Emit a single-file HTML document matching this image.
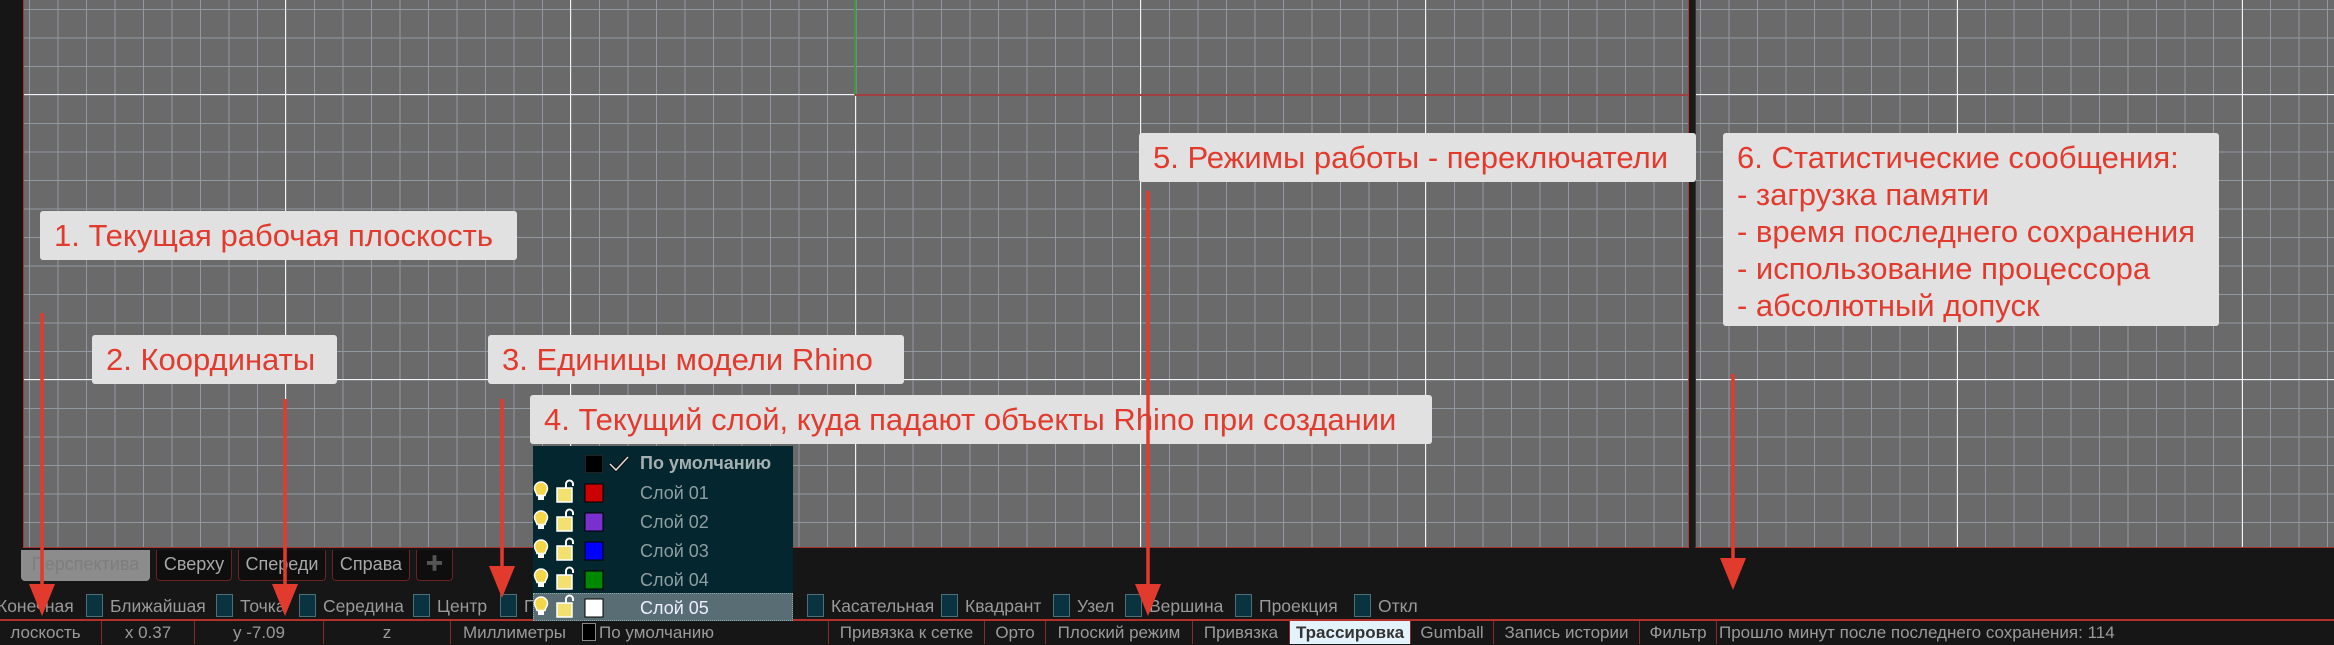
<!DOCTYPE html>
<html><head><meta charset="utf-8"><style>
*{margin:0;padding:0;box-sizing:border-box}
body{width:2334px;height:644px;background:#161616;position:relative;overflow:hidden;font-family:"Liberation Sans","Noto Sans CJK SC",sans-serif}
.vp{position:absolute;top:0;height:548px;background-color:#6a6a6a}
#v1{left:23px;width:1665px;border-left:1px solid #a33;border-bottom:1px solid #a33;
background-image:linear-gradient(to right,#f2f2f2 1px,transparent 1px),linear-gradient(to bottom,#f2f2f2 1px,transparent 1px),linear-gradient(to right,#9198a2 1px,transparent 1px),linear-gradient(to bottom,#9198a2 1px,transparent 1px);
background-size:285px 285px,285px 285px,28.5px 28.5px,28.5px 28.5px;background-position:261px 0,0 94px,5px 0,0 9px}
#v2{left:1695px;width:639px;border-left:1px solid #333;border-bottom:1px solid #a33;
background-image:linear-gradient(to right,#f2f2f2 1px,transparent 1px),linear-gradient(to bottom,#f2f2f2 1px,transparent 1px),linear-gradient(to right,#9198a2 1px,transparent 1px),linear-gradient(to bottom,#9198a2 1px,transparent 1px);
background-size:285px 285px,285px 285px,28.5px 28.5px,28.5px 28.5px;background-position:261px 0,0 94px,4px 0,0 9px}
.lbl{position:absolute;background:#e1e1e1;color:#e33a2e;font-size:31px;padding:0 14px;border-radius:3px;line-height:49px;white-space:nowrap}
.tab{position:absolute;top:550px;height:31px;background:#0e0e0e;border:1px solid #6a2222;border-top:none;color:#a8a8a8;font-size:18px;line-height:28px;text-align:center;border-radius:0 0 4px 4px}
.snap{position:absolute;top:594px;height:24px;font-size:17.5px;color:#9a9a9a;line-height:24px;white-space:nowrap}
.cb{display:inline-block;width:17px;height:23px;background:#0a3340;border:1px solid #4f6f76;vertical-align:top;margin-right:7px}
#sb{position:absolute;left:0;top:619px;width:2334px;height:25px;border-top:2px solid #b3302b}
.s{position:absolute;top:0;height:23px;font-size:17px;color:#9a9a9a;line-height:24px;text-align:center;border-left:1px solid #8a2a2a;white-space:nowrap}
#lay{position:absolute;left:533px;top:446px;width:260px;height:174px;background:#03262f}
.row{position:absolute;left:0;width:260px;height:29px;font-size:18px;color:#8f9ea2;line-height:29px}
.row span.t{position:absolute;left:107px}
.sw{position:absolute;left:52px;top:6px;width:18px;height:18px;border:1px solid #000}
</style></head><body>
<div class="vp" id="v1"></div>
<div class="vp" id="v2"></div>
<div style="position:absolute;left:1688px;top:0;width:7px;height:548px;background:#1a1a1a;border-left:1px solid #b33"></div>
<div style="position:absolute;left:854px;top:0;width:2px;height:95px;background:#3e9a3e"></div>
<div style="position:absolute;left:855px;top:94px;width:833px;height:2px;background:#a04040"></div>

<div class="tab" style="left:21px;width:129px;background:#8c8c8c;color:#7e7e7e;border-color:#8c8c8c">Перспектива</div>
<div class="tab" style="left:156px;width:76px">Сверху</div>
<div class="tab" style="left:238px;width:88px">Спереди</div>
<div class="tab" style="left:332px;width:78px">Справа</div>
<div class="tab" style="left:416px;width:37px;color:#555">✚</div>

<div class="snap" style="left:-3px">Конечная</div>
<div class="snap" style="left:86px"><span class="cb"></span>Ближайшая</div>
<div class="snap" style="left:216px"><span class="cb"></span>Точка</div>
<div class="snap" style="left:299px"><span class="cb"></span>Середина</div>
<div class="snap" style="left:413px"><span class="cb"></span>Центр</div>
<div class="snap" style="left:500px"><span class="cb"></span>П</div>
<div class="snap" style="left:807px"><span class="cb"></span>Касательная</div>
<div class="snap" style="left:941px"><span class="cb"></span>Квадрант</div>
<div class="snap" style="left:1053px"><span class="cb"></span>Узел</div>
<div class="snap" style="left:1125px"><span class="cb"></span>Вершина</div>
<div class="snap" style="left:1235px"><span class="cb"></span>Проекция</div>
<div class="snap" style="left:1354px"><span class="cb"></span>Откл</div>

<div id="sb">
<div class="s" style="left:-10px;width:111px;border:none">лоскость</div>
<div class="s" style="left:101px;width:93px">x 0.37</div>
<div class="s" style="left:194px;width:129px">y -7.09</div>
<div class="s" style="left:323px;width:127px">z</div>
<div class="s" style="left:450px;width:128px">Миллиметры</div>
<div class="s" style="left:582px;width:244px;text-align:left;border:none"><span style="display:inline-block;width:14px;height:18px;background:#000;border:1px solid #888;vertical-align:-3px;margin-right:3px"></span>По умолчанию</div>
<div class="s" style="left:828px;width:156px">Привязка к сетке</div>
<div class="s" style="left:984px;width:61px">Орто</div>
<div class="s" style="left:1045px;width:147px">Плоский режим</div>
<div class="s" style="left:1192px;width:97px">Привязка</div>
<div class="s" style="left:1289px;width:121px;background:#e4f2fb;color:#333;font-weight:bold">Трассировка</div>
<div class="s" style="left:1410px;width:83px">Gumball</div>
<div class="s" style="left:1493px;width:146px">Запись истории</div>
<div class="s" style="left:1639px;width:77px">Фильтр</div>
<div class="s" style="left:1716px;width:600px;text-align:left;padding-left:2px">Прошло минут после последнего сохранения: 114</div>
</div>

<div id="lay">
<div class="row" style="top:3px"><div class="sw" style="background:#000;border-color:#222"></div>
<svg style="position:absolute;left:75px;top:6px" width="22" height="18"><path d="M2 9 L8 15 L20 2" stroke="#111" stroke-width="4" fill="none"/><path d="M2 9 L8 15 L20 2" stroke="#ddd" stroke-width="1.5" fill="none"/></svg>
<span class="t" style="font-weight:bold;color:#a5b0b2">По умолчанию</span></div>
<div class="row" style="top:147px;background:#586e74;height:28px;border:1px dotted #8aa"></div>
</div>
<svg style="position:absolute;left:533px;top:446px" width="260" height="174" font-family="Liberation Sans" font-size="18">
<defs>
<g id="ic">
<path d="M8 4 a6.5 6.5 0 0 1 6.5 6.5 c0 3 -2 4 -2.5 7 h-8 c-0.5 -3 -2.5 -4 -2.5 -7 a6.5 6.5 0 0 1 6.5 -6.5z" fill="#f4d64a" stroke="#fff" stroke-width="1.5"/>
<rect x="5" y="18" width="6" height="4" fill="#fff"/>
<rect x="24" y="10" width="15" height="14" fill="#f2e070" stroke="#fff" stroke-width="1.5"/>
<path d="M33 10 v-4 a3.5 3.5 0 0 1 7 0 v2" fill="none" stroke="#fff" stroke-width="2"/>
</g></defs>
<g transform="translate(0,32)"><use href="#ic"/><rect x="52" y="6" width="18" height="18" fill="#c00" stroke="#000"/><text x="107" y="21" fill="#8f9ea2">Слой 01</text></g>
<g transform="translate(0,61)"><use href="#ic"/><rect x="52" y="6" width="18" height="18" fill="#7a2fcf" stroke="#000"/><text x="107" y="21" fill="#8f9ea2">Слой 02</text></g>
<g transform="translate(0,90)"><use href="#ic"/><rect x="52" y="6" width="18" height="18" fill="#00f" stroke="#000"/><text x="107" y="21" fill="#8f9ea2">Слой 03</text></g>
<g transform="translate(0,119)"><use href="#ic"/><rect x="52" y="6" width="18" height="18" fill="#080" stroke="#000"/><text x="107" y="21" fill="#8f9ea2">Слой 04</text></g>
<g transform="translate(0,147)"><use href="#ic"/><rect x="52" y="6" width="18" height="18" fill="#fff" stroke="#000"/><text x="107" y="21" fill="#eef">Слой 05</text></g>
</svg>

<div class="lbl" style="left:40px;top:211px;width:477px">1. Текущая рабочая плоскость</div>
<div class="lbl" style="left:92px;top:335px;width:245px">2. Координаты</div>
<div class="lbl" style="left:488px;top:335px;width:416px">3. Единицы модели Rhino</div>
<div class="lbl" style="left:530px;top:395px;width:902px">4. Текущий слой, куда падают объекты Rhino при создании</div>
<div class="lbl" style="left:1139px;top:133px;width:557px">5. Режимы работы - переключатели</div>
<div class="lbl" style="left:1723px;top:133px;width:496px;height:193px;line-height:37px;padding-top:6px">6. Статистические сообщения:<br>- загрузка памяти<br>- время последнего сохранения<br>- использование процессора<br>- абсолютный допуск</div>

<svg style="position:absolute;left:0;top:0" width="2334" height="644">
<g fill="#e33a2e" stroke="#e33a2e" stroke-width="3.5">
<line x1="42" y1="313" x2="42" y2="590"/><polygon points="29,584 55,584 42,616" stroke="none"/>
<line x1="285" y1="399" x2="285" y2="590"/><polygon points="272,584 298,584 285,616" stroke="none"/>
<line x1="502" y1="399" x2="502" y2="572"/><polygon points="489,566 515,566 502,598" stroke="none"/>
<line x1="1148" y1="191" x2="1148" y2="590"/><polygon points="1135,584 1161,584 1148,616" stroke="none"/>
<line x1="1733" y1="374" x2="1733" y2="564"/><polygon points="1720,558 1746,558 1733,590" stroke="none"/>
</g></svg>
</body></html>
